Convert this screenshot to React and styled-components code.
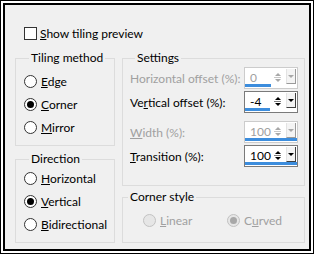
import React from "react";
import styled, { createGlobalStyle } from "styled-components";

const Global = createGlobalStyle`
  html, body { margin: 0; padding: 0; background: #fff; }
  body {
    font-family: Lato, "Noto Sans", sans-serif;
    font-size: 12px;
    color: #000;
  }
`;

const Frame = styled.div`
  width: 314px;
  height: 254px;
  box-sizing: border-box;
  border: 1px solid #000;
  background: #fff;
  padding: 2px;
`;

const Panel = styled.div`
  height: 100%;
  box-sizing: border-box;
  border: 2px solid #000;
  background: #f0f0f0;
  padding: 20px 4px 0 10px;
  display: flex;
  flex-direction: column;
`;

const CheckRow = styled.label`
  display: flex;
  align-items: center;
  gap: 3px;
  height: 16px;
  margin-left: 9px;
  margin-bottom: 9px;
`;

const CheckBox = styled.span`
  width: 13px;
  height: 13px;
  box-sizing: border-box;
  border: 1px solid #333;
  background: #fff;
  flex: none;
`;

const Key = styled.span`
  text-decoration: underline;
  text-underline-offset: 1px;
`;

const Columns = styled.div`
  display: flex;
  gap: 7px;
`;

const Column = styled.div`
  display: flex;
  flex-direction: column;
  width: ${(p) => p.$w};
  flex: none;
`;

const Group = styled.fieldset`
  margin: ${(p) => p.$mt || 0}px 0 0 0;
  min-width: 0;
  border: 1px solid #dcdcdc;
  padding: ${(p) => p.$pad};
  display: flex;
  flex-direction: column;
`;

const Legend = styled.legend`
  padding: 0 2px;
  margin-left: 5px;
  line-height: 16px;
  font-size: 12px;
`;

const RadioRow = styled.label`
  display: flex;
  align-items: center;
  gap: 4px;
  height: 23px;
  white-space: nowrap;
  color: ${(p) => (p.$disabled ? "#a0a0a0" : "#000")};
`;

const RadioCircle = styled.span`
  width: 13px;
  height: 13px;
  box-sizing: border-box;
  border-radius: 50%;
  border: 1px solid ${(p) => (p.$disabled ? "#c2c2c2" : "#333")};
  background: ${(p) => (p.$disabled ? "#e6e6e6" : "#fff")};
  display: flex;
  align-items: center;
  justify-content: center;
  flex: none;
  &::after {
    content: "";
    display: ${(p) => (p.$checked ? "block" : "none")};
    width: 7px;
    height: 7px;
    border-radius: 50%;
    background: ${(p) => (p.$disabled ? "#a8a8a8" : "#000")};
  }
`;

const Row = styled.div`
  display: flex;
  align-items: center;
  justify-content: space-between;
  height: 22px;
  white-space: nowrap;
  margin-top: ${(p) => p.$mt || 0}px;
  color: ${(p) => (p.$disabled ? "#a0a0a0" : "#000")};
`;

const Spin = styled.div`
  position: relative;
  width: 54px;
  height: 22px;
  flex: none;
  box-sizing: border-box;
  border: 1px solid ${(p) => (p.$disabled ? "#cccccc" : "#7a7a7a")};
  background: #fff;
  display: flex;
  align-items: center;
`;

const SpinValue = styled.span`
  flex: 1;
  padding-left: 5px;
  line-height: 16px;
  margin-top: -1px;
  color: ${(p) => (p.$disabled ? "#a0a0a0" : "#000")};
`;

const Arrows = styled.span`
  width: 7px;
  display: flex;
  flex-direction: column;
  align-items: center;
  gap: 1px;
  margin-right: 5px;
  margin-top: -2px;
`;

const Tri = styled.span`
  width: 0;
  height: 0;
  border-left: 3px solid transparent;
  border-right: 3px solid transparent;
  ${(p) => (p.$up ? "border-bottom" : "border-top")}: 3px solid ${(p) => p.$c};
`;

const Sep = styled.span`
  width: 7px;
  height: 1px;
  background: ${(p) => p.$c};
`;

const DropBtn = styled.span`
  width: 8px;
  height: 14px;
  margin-right: 1px;
  margin-top: -3px;
  border-left: 1px solid #e3e3e3;
  border-right: 1px solid ${(p) => (p.$disabled ? "#9a9a9a" : "#404040")};
  border-bottom: 1px solid ${(p) => (p.$disabled ? "#9a9a9a" : "#404040")};
  background: #f4f4f4;
  display: flex;
  align-items: center;
  justify-content: center;
`;

const Bar = styled.span`
  position: absolute;
  left: 0;
  bottom: 1px;
  height: 3px;
  background: #3c8ddd;
`;

const StyleRow = styled.div`
  display: grid;
  grid-template-columns: 84px auto;
  padding-left: 20px;
`;

function Radio({ checked, disabled, children }) {
  return (
    <RadioRow $disabled={disabled}>
      <RadioCircle $checked={checked} $disabled={disabled} />
      <span>{children}</span>
    </RadioRow>
  );
}

function SpinField({ value, min, max, disabled }) {
  const c = disabled ? "#a8a8a8" : "#000";
  const pct = ((value - min) / (max - min)) * 100;
  return (
    <Spin $disabled={disabled}>
      <SpinValue $disabled={disabled}>{value}</SpinValue>
      <Arrows>
        <Tri $up $c={c} />
        <Sep $c={disabled ? "#c8c8c8" : "#808080"} />
        <Tri $c={c} />
      </Arrows>
      <DropBtn $disabled={disabled}>
        <Tri $c={c} />
      </DropBtn>
      <Bar style={{ width: `${pct}%` }} />
    </Spin>
  );
}

function Setting({ label, value, min, max, disabled, mt }) {
  return (
    <Row $disabled={disabled} $mt={mt}>
      <span>{label}</span>
      <SpinField value={value} min={min} max={max} disabled={disabled} />
    </Row>
  );
}

export default function App() {
  return (
    <>
      <Global />
      <Frame>
        <Panel>
          <CheckRow>
            <CheckBox />
            <span>
              <Key>S</Key>how tiling preview
            </span>
          </CheckRow>
          <Columns>
            <Column $w="100px">
              <Group $pad="4px 0 6px 8px">
                <Legend>Tiling method</Legend>
                <Radio>
                  <Key>E</Key>dge
                </Radio>
                <Radio checked>
                  <Key>C</Key>orner
                </Radio>
                <Radio>
                  <Key>M</Key>irror
                </Radio>
              </Group>
              <Group $mt={5} $pad="0 0 6px 8px">
                <Legend>Direction</Legend>
                <Radio>
                  <Key>H</Key>orizontal
                </Radio>
                <Radio checked>
                  <Key>V</Key>ertical
                </Radio>
                <Radio>
                  <Key>B</Key>idirectional
                </Radio>
              </Group>
            </Column>
            <Column $w="183px">
              <Group $pad="1px 6px 18px 7px">
                <Legend>Settings</Legend>
                <Setting
                  label="Horizontal offset (%):"
                  value={0}
                  min={-100}
                  max={100}
                  disabled
                />
                <Setting
                  label={
                    <>
                      Ve<Key>r</Key>tical offset (%):
                    </>
                  }
                  value={-4}
                  min={-100}
                  max={100}
                  mt={2}
                />
                <Setting
                  label={
                    <>
                      <Key>W</Key>idth (%):
                    </>
                  }
                  value={100}
                  min={0}
                  max={100}
                  disabled
                  mt={8}
                />
                <Setting
                  label={
                    <>
                      <Key>T</Key>ransition (%):
                    </>
                  }
                  value={100}
                  min={0}
                  max={100}
                  mt={2}
                />
              </Group>
              <Group $mt={3} $pad="4px 0 10px 0">
                <Legend>Corner style</Legend>
                <StyleRow>
                  <Radio disabled>
                    <Key>L</Key>inear
                  </Radio>
                  <Radio checked disabled>
                    C<Key>u</Key>rved
                  </Radio>
                </StyleRow>
              </Group>
            </Column>
          </Columns>
        </Panel>
      </Frame>
    </>
  );
}
